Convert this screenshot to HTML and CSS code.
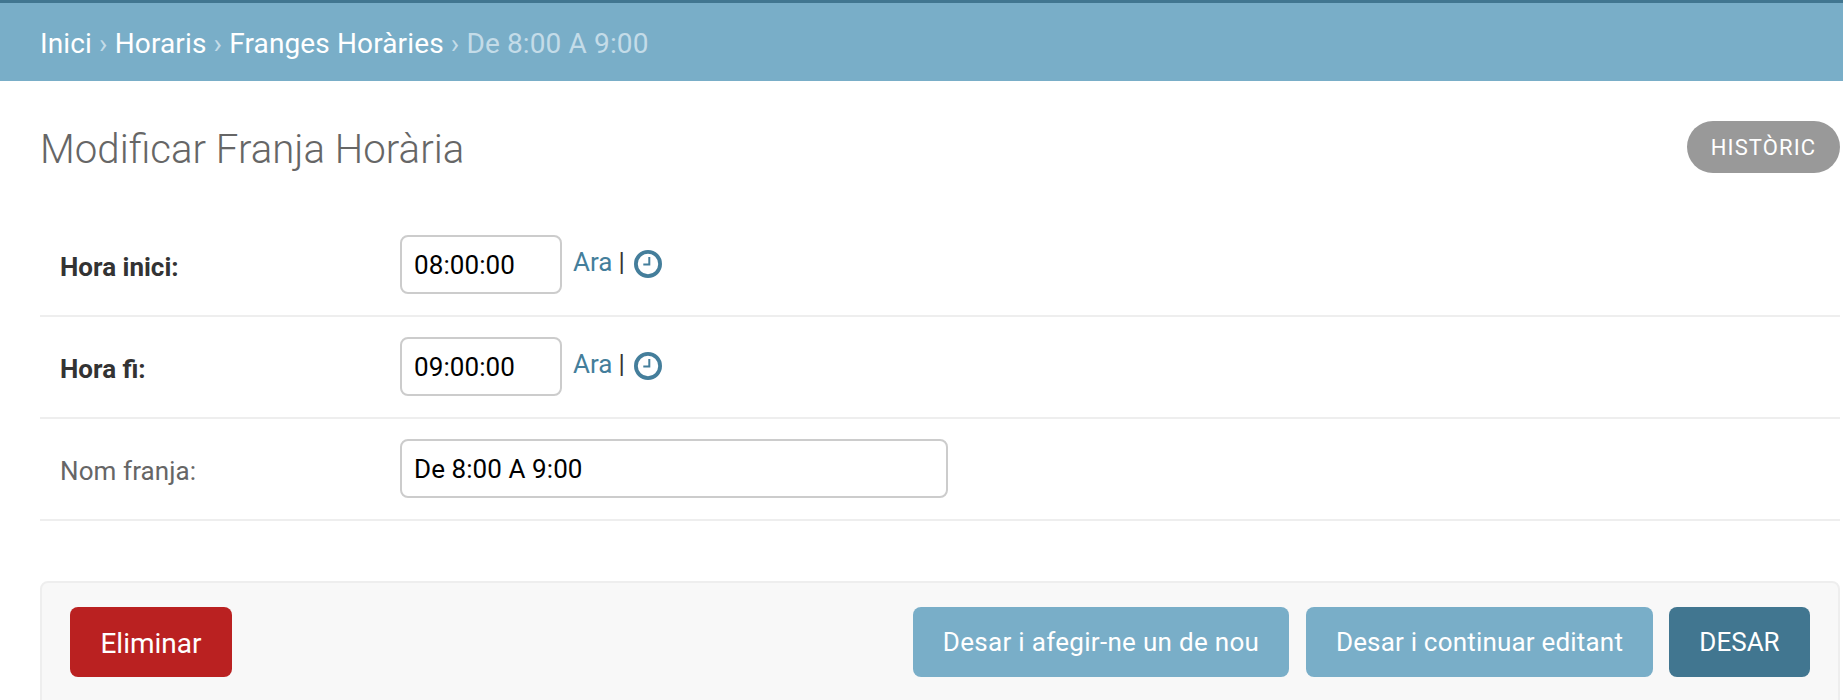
FILE: index.html
```html
<!DOCTYPE html>
<html lang="ca">
<head>
<meta charset="utf-8">
<title>Modificar Franja Horària</title>
<link rel="stylesheet" href="styles.css">
</head>
<body>
<nav class="breadcrumbs"><a href="#">Inici</a> › <a href="#">Horaris</a> › <a href="#">Franges Horàries</a> › De 8:00 A 9:00</nav>
<main class="content">
  <header class="title-row">
    <h1>Modificar Franja Horària</h1>
    <a class="history" href="#">Històric</a>
  </header>
  <form class="form">
    <div class="row">
      <label class="required" for="start">Hora inici:</label>
      <input id="start" class="time" type="text" value="08:00:00">
      <span class="shortcuts"><a href="#">Ara</a><span class="bar">|</span>
        <svg class="clock" viewBox="0 0 28 28"><circle cx="14" cy="14" r="12.1"/><path class="hands" d="M15.3 7v7.6H9.3"/></svg></span>
    </div>
    <div class="row">
      <label class="required" for="end">Hora fi:</label>
      <input id="end" class="time" type="text" value="09:00:00">
      <span class="shortcuts"><a href="#">Ara</a><span class="bar">|</span>
        <svg class="clock" viewBox="0 0 28 28"><circle cx="14" cy="14" r="12.1"/><path class="hands" d="M15.3 7v7.6H9.3"/></svg></span>
    </div>
    <div class="row">
      <label for="name">Nom franja:</label>
      <input id="name" class="name" type="text" value="De 8:00 A 9:00">
    </div>
    <div class="submit-row">
      <a class="button delete" href="#">Eliminar</a>
      <button class="button add" type="button">Desar i afegir-ne un de nou</button>
      <button class="button continue" type="button">Desar i continuar editant</button>
      <button class="button save" type="button">DESAR</button>
    </div>
  </form>
</main>
</body>
</html>
```
FILE: styles.css
```css
* { box-sizing: border-box; }
body {
  margin: 0;
  height: 700px;
  overflow: hidden;
  background: #fff;
  color: #333;
  font-family: Roboto, "Liberation Sans", sans-serif;
  font-size: 26px;
}
a { color: #447e9b; text-decoration: none; }
.breadcrumbs {
  height: 81px;
  border-top: 3px solid #417690;
  padding-left: 40px;
  background: #79aec8;
  color: #c4dce8;
  font-size: 28px;
  letter-spacing: 0.13px;
  line-height: 82px;
}
.breadcrumbs a { color: #fff; }
.content { padding: 40px 3px 0 40px; }
.title-row {
  display: flex;
  justify-content: space-between;
  align-items: flex-start;
  height: 94px;
}
h1 {
  margin: 6px 0 0;
  color: #666;
  font-size: 40.2px;
  font-weight: 300;
  line-height: 46px;
}
.history {
  width: 153px;
  height: 52px;
  border-radius: 26px;
  background: #999;
  color: #fff;
  font-size: 22px;
  letter-spacing: 1.1px;
  line-height: 54px;
  text-align: center;
  text-transform: uppercase;
}
.row {
  display: flex;
  align-items: flex-start;
  height: 102px;
  padding: 20px 0 0 20px;
  border-bottom: 2px solid #eee;
}
label {
  width: 340px;
  padding-top: 17px;
  color: #666;
  letter-spacing: 0.1px;
  line-height: 30px;
}
label.required { color: #333; font-weight: 700; letter-spacing: 0; }
input {
  height: 59px;
  padding: 0 12px;
  border: 2px solid #ccc;
  border-radius: 8px;
  background: #fff;
  color: #000;
  font: inherit;
  letter-spacing: 0.08px;
}
.time { width: 162px; }
.name { width: 548px; }
.shortcuts {
  display: flex;
  align-items: flex-start;
  padding: 12px 0 0 11px;
  line-height: 30px;
}
.bar { margin-left: 6px; }
.clock { width: 28px; height: 28px; margin: 3px 0 0 9px; }
.clock circle { fill: none; stroke: #447e9b; stroke-width: 3.8; }
.hands { fill: none; stroke: #447e9b; stroke-width: 2; }
.submit-row {
  display: flex;
  height: 128px;
  margin-top: 60px;
  padding: 24px 28px;
  border: 2px solid #eee;
  border-radius: 8px;
  background: #f8f8f8;
}
.button {
  height: 70px;
  padding: 0;
  border: 0;
  border-radius: 8px;
  background: #79aec8;
  color: #fff;
  font: inherit;
  line-height: 70px;
  text-align: center;
}
.delete { width: 162px; margin-right: auto; background: #ba2121; font-size: 28px; line-height: 73px; }
.add { width: 376px; letter-spacing: 0.3px; }
.continue { width: 347px; margin-left: 17px; letter-spacing: 0.19px; }
.save { width: 141px; margin-left: 16px; background: #417690; }
```
